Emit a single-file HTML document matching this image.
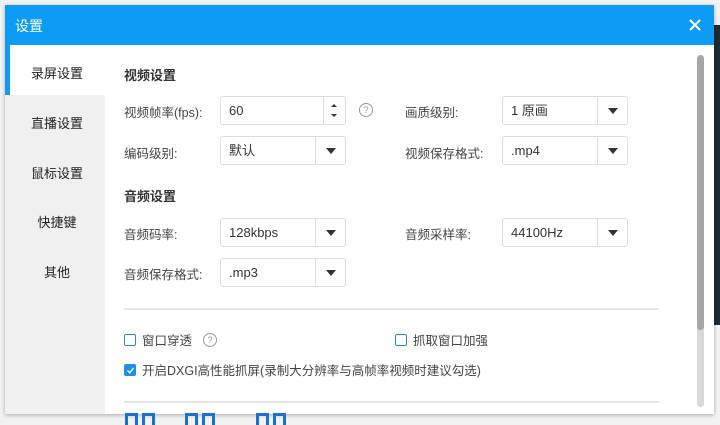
<!DOCTYPE html>
<html><head><meta charset="utf-8"><style>
*{margin:0;padding:0;box-sizing:border-box}
body{width:720px;height:420px;overflow:hidden;background:#f2f2f2;position:relative;font-family:"Liberation Sans","Noto Sans CJK SC",sans-serif;color:#333;font-size:13px}
.abs{position:absolute}
.strip{left:714px;top:25px;width:6px;height:300px;background:#1c2c30}
.dlg{left:5px;top:5px;width:709px;height:409px;background:#fff;box-shadow:0 1px 4px rgba(0,0,0,.3)}
.hd{left:5px;top:5px;width:709px;height:40px;background:#0c9bf5;color:#fff;font-size:14px}
.side{left:5px;top:45px;width:100px;height:369px;background:#f0f0f0}
.nav{left:5px;width:100px;text-align:center;font-size:13px;color:#222}
.lbl{font-size:12.5px;color:#444}
.ttl{font-size:13px;font-weight:bold;color:#333}
.box{height:29px;border:1px solid #ddd;border-radius:3px;background:#fff;font-size:13px;line-height:27px;padding-left:8px;color:#333}
.box .dd{position:absolute;right:0;top:0;width:30px;height:27px;border-left:1px solid #ddd}
.box .dd:after{content:"";position:absolute;left:10px;top:11px;border-left:5px solid transparent;border-right:5px solid transparent;border-top:6px solid #333}
.hr{height:2px;background:#e6e6e6}
.cb{width:12px;height:12px;border:1px solid #2a8ab0;border-radius:2px;background:#fff}
.q{width:14px;height:14px;border:1px solid #999;border-radius:50%;font-size:9px;color:#999;text-align:center;line-height:12px}
.sq{top:413px;width:13px;height:12px;border:3px solid #1a6fd0;border-bottom:none}
</style></head><body>
<div class="abs strip"></div>
<div class="abs dlg"></div>
<div class="abs hd"><span class="abs" style="left:10px;top:11px">设置</span>
<svg class="abs" style="left:683px;top:13px" width="14" height="14"><path d="M2 2L12 12M12 2L2 12" stroke="#fff" stroke-width="2"/></svg></div>
<div class="abs side"></div>
<div class="abs" style="left:5px;top:45px;width:5px;height:50px;background:#0c9bf5"></div>
<div class="abs" style="left:10px;top:45px;width:95px;height:50px;background:#fff"></div>
<div class="abs nav" style="top:63px;left:7px">录屏设置</div>
<div class="abs nav" style="top:113px;left:7px">直播设置</div>
<div class="abs nav" style="top:163px;left:7px">鼠标设置</div>
<div class="abs nav" style="top:212px;left:7px">快捷键</div>
<div class="abs nav" style="top:262px;left:7px">其他</div>
<div class="abs" style="left:697px;top:55px;width:7px;height:352px;background:#d9d9d9;border-radius:4px"></div>
<div class="abs" style="left:697px;top:55px;width:7px;height:275px;background:#a6a6a6;border-radius:4px"></div>

<div class="abs ttl" style="left:124px;top:65px">视频设置</div>
<div class="abs lbl" style="left:124px;top:102px">视频帧率(fps):</div>
<div class="abs box" style="left:220px;top:96px;width:126px">60<div class="abs" style="right:0;top:0;width:22px;height:27px;border-left:1px solid #ddd"></div>
<svg class="abs" style="right:0;top:0" width="22" height="27"><path d="M8 10L11 7L14 10Z M8 17L11 20L14 17Z" fill="#333"/></svg></div>
<div class="abs q" style="left:359px;top:103px">?</div>
<div class="abs lbl" style="left:405px;top:102px">画质级别:</div>
<div class="abs box" style="left:502px;top:96px;width:126px">1 原画<div class="dd"></div></div>
<div class="abs lbl" style="left:124px;top:143px">编码级别:</div>
<div class="abs box" style="left:220px;top:136px;width:126px">默认<div class="dd"></div></div>
<div class="abs lbl" style="left:405px;top:143px">视频保存格式:</div>
<div class="abs box" style="left:502px;top:136px;width:126px">.mp4<div class="dd"></div></div>

<div class="abs ttl" style="left:124px;top:186px">音频设置</div>
<div class="abs lbl" style="left:124px;top:224px">音频码率:</div>
<div class="abs box" style="left:220px;top:218px;width:126px">128kbps<div class="dd"></div></div>
<div class="abs lbl" style="left:405px;top:224px">音频采样率:</div>
<div class="abs box" style="left:502px;top:218px;width:126px">44100Hz<div class="dd"></div></div>
<div class="abs lbl" style="left:124px;top:264px">音频保存格式:</div>
<div class="abs box" style="left:220px;top:258px;width:126px">.mp3<div class="dd"></div></div>

<div class="abs hr" style="left:124px;top:308px;width:535px"></div>
<div class="abs cb" style="left:124px;top:334px"></div>
<div class="abs lbl" style="left:142px;top:330px">窗口穿透</div>
<div class="abs q" style="left:203px;top:333px">?</div>
<div class="abs cb" style="left:395px;top:334px"></div>
<div class="abs lbl" style="left:413px;top:330px">抓取窗口加强</div>
<div class="abs cb" style="left:124px;top:364px;background:#1e90e6;border-color:#1e90e6"><svg class="abs" style="left:1px;top:1px" width="9" height="9"><path d="M1.5 4.5L3.8 6.8L7.5 2" stroke="#fff" stroke-width="1.4" fill="none"/></svg></div>
<div class="abs lbl" style="left:142px;top:360px">开启DXGI高性能抓屏(录制大分辨率与高帧率视频时建议勾选)</div>
<div class="abs hr" style="left:124px;top:401px;width:535px"></div>
<div class="abs sq" style="left:125px"></div><div class="abs sq" style="left:142px"></div>
<div class="abs sq" style="left:185px"></div><div class="abs sq" style="left:202px"></div>
<div class="abs sq" style="left:256px"></div><div class="abs sq" style="left:273px"></div>
</body></html>
